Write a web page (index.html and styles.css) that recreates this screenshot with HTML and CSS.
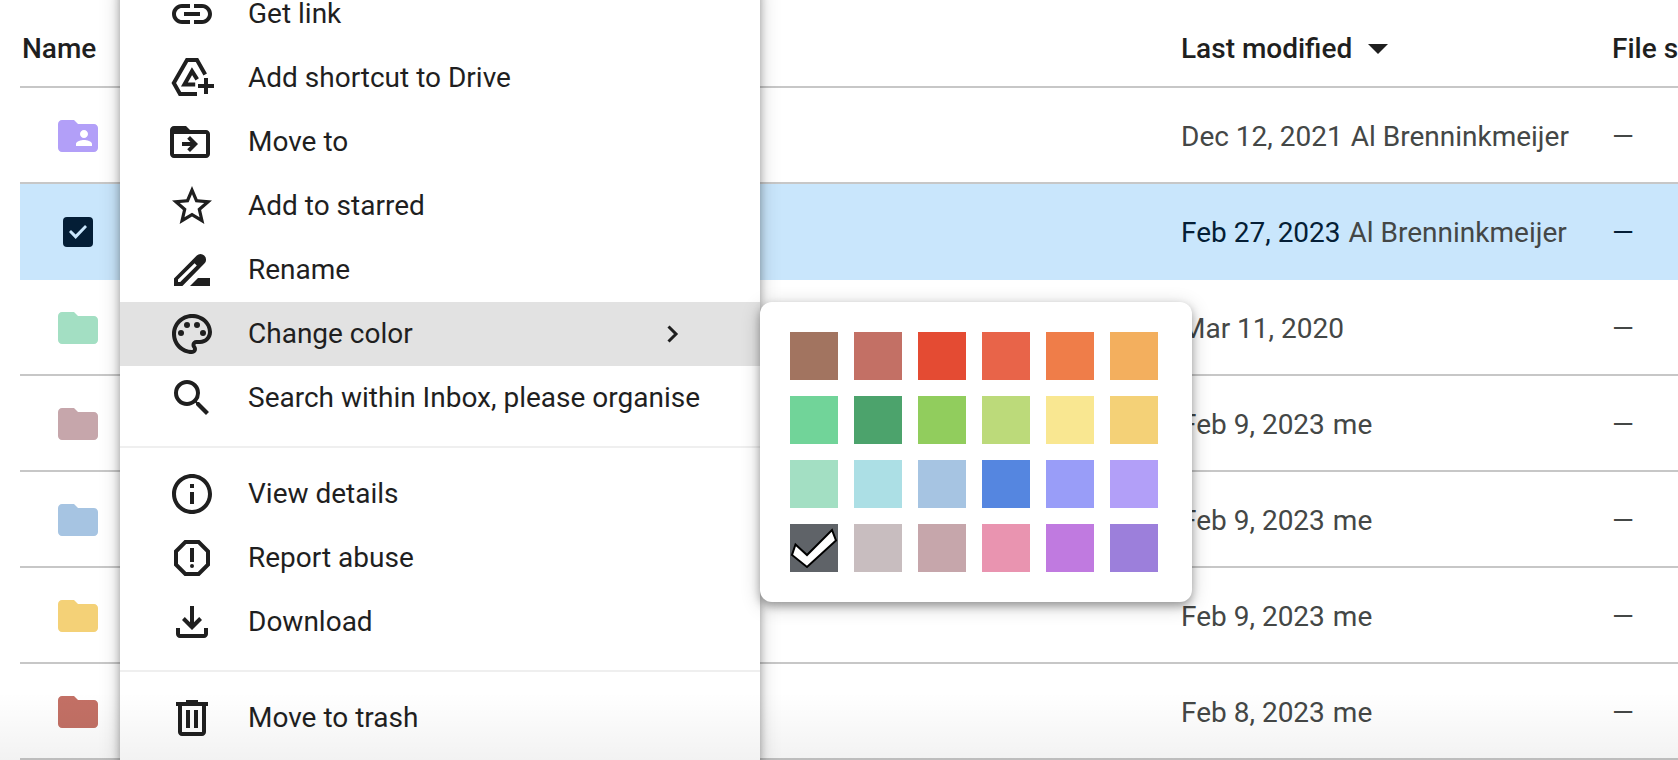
FILE: index.html
```html
<!DOCTYPE html>
<html lang="en">
<head>
<meta charset="utf-8">
<title>Drive</title>
<link rel="stylesheet" href="styles.css">
</head>
<body>
<main class="files">
  <table class="file-table">
    <colgroup><col class="col-name"><col class="col-modified"><col class="col-size"></colgroup>
    <thead>
      <tr><th scope="col">Name</th><th scope="col"><button class="sort" type="button">Last modified <svg class="arrow" viewBox="0 0 20 10" aria-hidden="true"><path d="M0 0h20L10 10z"/></svg></button></th><th scope="col">File size</th></tr>
    </thead>
    <tbody>
      <tr><td><svg class="folder lavender" viewBox="0 0 24 24" role="img" aria-label="Shared folder"><path d="M20 6h-8l-2-2H4c-1.100 0-1.990.9-1.990 2L2 18c0 1.100.9 2 2 2h16c1.100 0 2-.9 2-2V8c0-1.100-.9-2-2-2zm-5 3c1.100 0 2 .9 2 2s-.9 2-2 2-2-.9-2-2 .9-2 2-2zm4 8h-8v-1c0-1.330 2.670-2 4-2s4 .67 4 2v1z"/></svg></td><td>Dec 12, 2021<span class="author">Al Brenninkmeijer</span></td><td>—</td></tr>
      <tr class="selected"><td><input class="tick" type="checkbox" checked aria-label="Select folder"></td><td>Feb 27, 2023<span class="author">Al Brenninkmeijer</span></td><td>—</td></tr>
      <tr><td><svg class="folder mint" viewBox="0 0 24 24" role="img" aria-label="Folder"><use href="#folder"/></svg></td><td>Mar 11, 2020</td><td>—</td></tr>
      <tr><td><svg class="folder mauve" viewBox="0 0 24 24" role="img" aria-label="Folder"><use href="#folder"/></svg></td><td>Feb 9, 2023<span class="author">me</span></td><td>—</td></tr>
      <tr><td><svg class="folder sky" viewBox="0 0 24 24" role="img" aria-label="Folder"><use href="#folder"/></svg></td><td>Feb 9, 2023<span class="author">me</span></td><td>—</td></tr>
      <tr><td><svg class="folder yellow" viewBox="0 0 24 24" role="img" aria-label="Folder"><use href="#folder"/></svg></td><td>Feb 9, 2023<span class="author">me</span></td><td>—</td></tr>
      <tr><td><svg class="folder brick" viewBox="0 0 24 24" role="img" aria-label="Folder"><use href="#folder"/></svg></td><td>Feb 8, 2023<span class="author">me</span></td><td>—</td></tr>
    </tbody>
  </table>

  <nav class="menu" aria-label="Folder actions">
    <button class="item" type="button"><svg class="icon" viewBox="0 0 24 24" aria-hidden="true"><path d="M11 17H7c-2.760 0-5-2.240-5-5s2.240-5 5-5h4v2H7c-1.650 0-3 1.350-3 3s1.350 3 3 3h4zM8 11h8v2H8zM13 17v-2h4c1.650 0 3-1.350 3-3s-1.350-3-3-3h-4V7h4c2.760 0 5 2.240 5 5s-2.240 5-5 5z"/></svg>Get link</button>
    <button class="item" type="button"><svg class="icon line" viewBox="0 0 24 24" aria-hidden="true"><path d="M18.600 10.200 14.500 3H9.500L2.900 14.500 6 20h8.500"/><path d="M14.600 12.700 12 8.600 8.200 15.300h5.400"/><path d="M19 12v8M15 16h8"/></svg>Add shortcut to Drive</button>
    <button class="item" type="button"><svg class="icon" viewBox="1 0 24 24" aria-hidden="true"><path fill-rule="evenodd" d="M20 6h-8l-2-2H4c-1.100 0-2 .9-2 2v12c0 1.100.9 2 2 2h16c1.100 0 2-.9 2-2V8c0-1.100-.9-2-2-2zM4 8h16v10H4z"/><path d="M8 12v2h4.200l-1.600 1.600L12 17l4-4-4-4-1.400 1.400 1.600 1.600z"/></svg>Move to</button>
    <button class="item" type="button"><svg class="icon" viewBox="0 0 24 24" aria-hidden="true"><path d="M22 9.240l-7.190-.62L12 2 9.190 8.630 2 9.240l5.460 4.730L5.820 21 12 17.270 18.180 21l-1.630-7.030L22 9.240zM12 15.400l-3.760 2.270 1-4.280-3.320-2.880 4.380-.38L12 6.100l1.710 4.040 4.380.38-3.320 2.880 1 4.280L12 15.400z"/></svg>Add to starred</button>
    <button class="item" type="button"><svg class="icon" viewBox="0 0 24 24" aria-hidden="true"><path fill-rule="evenodd" d="M18.100 4.800a2.600 2.600 0 0 0-3.700 0L3 16.200V20h4.200L18.200 8.800a2.700 2.700 0 0 0-.1-4zM6.100 18H5v-1.200l8.300-8.200 1.100 1.100z"/><path d="m15 16-4 4h10v-4z"/></svg>Rename</button>
    <button class="item active" type="button" aria-haspopup="true" aria-expanded="true"><svg class="icon" viewBox="0 0 24 24" aria-hidden="true"><path d="M12 22C6.490 22 2 17.510 2 12S6.490 2 12 2s10 4.040 10 9c0 3.310-2.690 6-6 6h-1.770c-.28 0-.5.22-.5.5 0 .12.050.23.130.33.410.47.640 1.060.640 1.670A2.500 2.500 0 0 1 12 22zm0-18c-4.410 0-8 3.590-8 8s3.590 8 8 8c.28 0 .5-.22.5-.5a.54.54 0 0 0-.14-.35c-.41-.46-.63-1.050-.63-1.650a2.500 2.500 0 0 1 2.500-2.500H16c2.210 0 4-1.790 4-4 0-3.860-3.590-7-8-7z"/><circle cx="6.500" cy="11.500" r="1.500"/><circle cx="9.500" cy="7.500" r="1.500"/><circle cx="14.500" cy="7.500" r="1.500"/><circle cx="17.500" cy="11.500" r="1.500"/></svg>Change color<svg class="chevron" viewBox="0 0 24 24" aria-hidden="true"><path d="m6.500 4.500 7.500 7.500-7.500 7.500"/></svg></button>
    <button class="item" type="button"><svg class="icon" viewBox="0 0 24 24" aria-hidden="true"><path d="M15.500 14h-.79l-.28-.27A6.471 6.471 0 0 0 16 9.500 6.500 6.500 0 1 0 9.500 16c1.610 0 3.090-.59 4.230-1.570l.27.28v.79l5 4.990L20.490 19l-4.990-5zm-6 0C7.010 14 5 11.990 5 9.500S7.010 5 9.500 5 14 7.010 14 9.500 11.990 14 9.500 14z"/></svg>Search within Inbox, please organise</button>
    <hr class="divider">
    <button class="item" type="button"><svg class="icon" viewBox="0 0 24 24" aria-hidden="true"><path d="M11 7h2v2h-2zm0 4h2v6h-2zm1-9C6.480 2 2 6.480 2 12s4.480 10 10 10 10-4.480 10-10S17.520 2 12 2zm0 18c-4.410 0-8-3.590-8-8s3.590-8 8-8 8 3.590 8 8-3.590 8-8 8z"/></svg>View details</button>
    <button class="item" type="button"><svg class="icon" viewBox="0 0 24 24" aria-hidden="true"><path d="M15.730 3H8.270L3 8.270v7.460L8.270 21h7.460L21 15.730V8.270L15.730 3zM19 14.900L14.900 19H9.100L5 14.900V9.100L9.100 5h5.800L19 9.100v5.800z"/><circle cx="12" cy="16" r="1"/><path d="M11 7h2v7h-2z"/></svg>Report abuse</button>
    <button class="item" type="button"><svg class="icon" viewBox="0 0 24 24" aria-hidden="true"><path d="m12 16-5-5 1.400-1.450 2.600 2.600V4h2v8.150l2.600-2.600L17 11zm-6 4c-1.100 0-2-.9-2-2v-3h2v3h12v-3h2v3c0 1.100-.9 2-2 2z"/></svg>Download</button>
    <hr class="divider">
    <button class="item" type="button"><svg class="icon" viewBox="0 0 24 24" aria-hidden="true"><path d="M15 4V3H9v1H4v2h1v13c0 1.100.9 2 2 2h10c1.100 0 2-.9 2-2V6h1V4h-5zm2 15H7V6h10v13zM9 8h2v9H9zm4 0h2v9h-2z"/></svg>Move to trash</button>
  </nav>

  <div class="palette" role="group" aria-label="Folder color">
    <button class="swatch" type="button" aria-label="Chocolate ice cream" style="background:#a27460"></button>
    <button class="swatch" type="button" aria-label="Old brick red" style="background:#c37065"></button>
    <button class="swatch" type="button" aria-label="Cardinal" style="background:#e44b33"></button>
    <button class="swatch" type="button" aria-label="Wild strawberries" style="background:#e86449"></button>
    <button class="swatch" type="button" aria-label="Mars orange" style="background:#ef7d49"></button>
    <button class="swatch" type="button" aria-label="Yellow cab" style="background:#f3af5e"></button>
    <button class="swatch" type="button" aria-label="Spearmint" style="background:#71d499"></button>
    <button class="swatch" type="button" aria-label="Vern fern" style="background:#4ca36c"></button>
    <button class="swatch" type="button" aria-label="Asparagus" style="background:#91cd5d"></button>
    <button class="swatch" type="button" aria-label="Slime green" style="background:#bcda7a"></button>
    <button class="swatch" type="button" aria-label="Desert sand" style="background:#f9e791"></button>
    <button class="swatch" type="button" aria-label="Macaroni" style="background:#f4d177"></button>
    <button class="swatch" type="button" aria-label="Sea foam" style="background:#a3dfc3"></button>
    <button class="swatch" type="button" aria-label="Pool" style="background:#acdfe5"></button>
    <button class="swatch" type="button" aria-label="Denim" style="background:#a6c4e2"></button>
    <button class="swatch" type="button" aria-label="Rainy sky" style="background:#5586e0"></button>
    <button class="swatch" type="button" aria-label="Blue velvet" style="background:#999df8"></button>
    <button class="swatch" type="button" aria-label="Purple dino" style="background:#b29ff8"></button>
    <button class="swatch" type="button" aria-label="Mouse" aria-pressed="true" style="background:#5f6368"><svg class="mark" viewBox="0 0 48 48" aria-hidden="true"><path d="M5.500 20.500 17 31 42 6l4 10.500L17 43 2 31z"/></svg></button>
    <button class="swatch" type="button" aria-label="Mountain grey" style="background:#c8bdbf"></button>
    <button class="swatch" type="button" aria-label="Earthworm" style="background:#c6a6ab"></button>
    <button class="swatch" type="button" aria-label="Bubble gum" style="background:#e994b0"></button>
    <button class="swatch" type="button" aria-label="Purple rain" style="background:#c07ae0"></button>
    <button class="swatch" type="button" aria-label="Toy eggplant" style="background:#9c7fdb"></button>
  </div>
  <div class="fade"></div>
</main>
<svg class="symbols" aria-hidden="true"><symbol id="folder" viewBox="0 0 24 24"><path d="M10 4H4c-1.100 0-1.990.9-1.990 2L2 18c0 1.100.9 2 2 2h16c1.100 0 2-.9 2-2V8c0-1.100-.9-2-2-2h-8l-2-2z"/></symbol></svg>
</body>
</html>
```

FILE: styles.css
```css
* { box-sizing: border-box; }

body {
  margin: 0;
  background: #fff;
  color: #1f1f1f;
  font: 28px/28px Roboto, "Liberation Sans", sans-serif;
}

button { font: inherit; color: inherit; border: 0; padding: 0; background: none; text-align: left; }

.files {
  position: relative;
  height: 100vh;
  overflow: hidden;
  padding-left: 20px;
}

.file-table {
  width: 100%;
  table-layout: fixed;
  border-collapse: separate;
  border-spacing: 0;
  white-space: nowrap;
}
.col-modified { width: 431px; }
.col-size { width: 68px; }

th { height: 88px; padding: 12px 2px 0; text-align: left; font-weight: 500; }
td { height: 96px; padding: 4px 2px 0; color: #444746; }
th, td { border-bottom: 2px solid #c7c7c7; overflow: hidden; }
td:first-child { padding: 2px 0 0 34px; }

.sort { display: flex; align-items: center; gap: 16px; }
.arrow { width: 20px; height: 10px; fill: #1f1f1f; }
.author { margin-left: 8px; color: #444746; }

.selected td { background: #c9e6fc; border-color: #c9e6fc; color: #041e36; }
.selected .author { color: #444746; }

.folder { display: block; width: 48px; height: 48px; }
.lavender { fill: #b29ff8; }
.mint { fill: #a3dfc3; }
.mauve { fill: #c6a6ab; }
.sky { fill: #a6c4e2; }
.yellow { fill: #f4d177; }
.brick { fill: #c37065; }

.tick {
  display: grid;
  place-items: center;
  appearance: none;
  width: 30px;
  height: 30px;
  margin: 0 0 0 9px;
  border-radius: 4px;
  background: #041e36;
}
.tick::before {
  content: "";
  width: 18px;
  height: 14px;
  background: #c9e6fc;
  clip-path: polygon(0 50%, 11% 35%, 37% 68%, 89% 0, 100% 15%, 37% 100%);
}

.menu {
  position: absolute;
  top: -18px;
  left: 120px;
  width: 640px;
  padding-bottom: 16px;
  background: #fff;
  box-shadow: 0 4px 8px rgba(0, 0, 0, .3), 0 4px 20px rgba(0, 0, 0, .2);
}
.item {
  display: flex;
  align-items: center;
  gap: 32px;
  width: 100%;
  height: 64px;
  padding: 0 48px;
  white-space: nowrap;
}
.active { padding-right: 74px; background: #e2e2e2; }
.icon { flex: none; width: 48px; height: 48px; fill: #1f1f1f; }
.line { fill: none; stroke: #1f1f1f; stroke-width: 2; }
.chevron { flex: none; width: 24px; height: 24px; margin-left: auto; fill: none; stroke: #1f1f1f; stroke-width: 3; }
.divider { height: 2px; margin: 16px 0 14px; border: 0; background: #efefef; }

.palette {
  position: absolute;
  top: 302px;
  left: 760px;
  display: grid;
  grid-template-columns: repeat(6, 48px);
  gap: 16px;
  padding: 30px 34px 30px 30px;
  border-radius: 12px;
  background: #fff;
  box-shadow: 0 4px 8px rgba(0, 0, 0, .3), 0 4px 20px rgba(0, 0, 0, .2);
}
.swatch { height: 48px; }
.mark { display: block; width: 48px; height: 48px; fill: #fff; stroke: #000; stroke-width: 2; }

.fade {
  position: absolute;
  inset: auto 0 0;
  height: 68px;
  background: linear-gradient(rgba(0, 0, 0, 0), rgba(0, 0, 0, .05));
  pointer-events: none;
}
.symbols { display: none; }
```
